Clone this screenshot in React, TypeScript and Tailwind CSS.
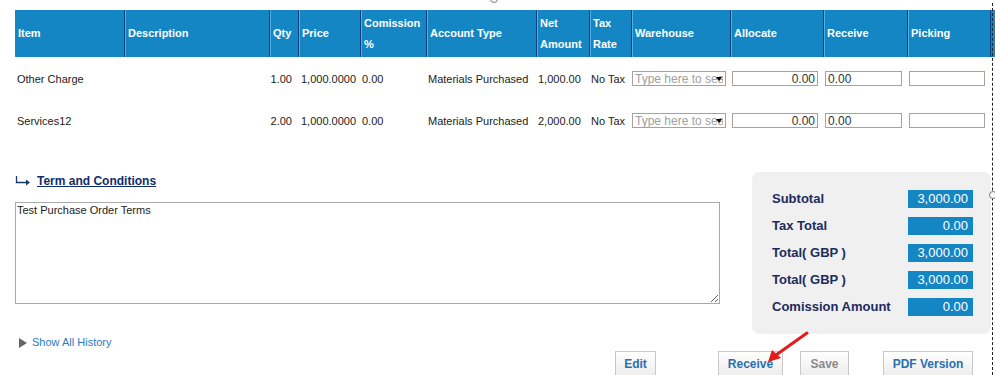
const cols = [
  { key: 'item', label: ['Item'] },
  { key: 'desc', label: ['Description'] },
  { key: 'qty', label: ['Qty'] },
  { key: 'price', label: ['Price'] },
  { key: 'com', label: ['Comission', '%'] },
  { key: 'acct', label: ['Account Type'] },
  { key: 'net', label: ['Net', 'Amount'] },
  { key: 'tax', label: ['Tax', 'Rate'] },
  { key: 'wh', label: ['Warehouse'] },
  { key: 'alloc', label: ['Allocate'] },
  { key: 'recv', label: ['Receive'] },
  { key: 'pick', label: ['Picking'] },
]

const rows = [
  { item: 'Other Charge', qty: '1.00', net: '1,000.00' },
  { item: 'Services12', qty: '2.00', net: '2,000.00' },
]

const totals = [
  { label: 'Subtotal', value: '3,000.00' },
  { label: 'Tax Total', value: '0.00' },
  { label: 'Total( GBP )', value: '3,000.00' },
  { label: 'Total( GBP )', value: '3,000.00' },
  { label: 'Comission Amount', value: '0.00' },
]

const grid = 'grid grid-cols-[109px_145px_29px_62px_66px_110px_53px_42px_99px_93px_84px_84px]'
const inputCls =
  'h-[15px] border border-[#a7a39b] bg-white px-[2px] text-[12px] leading-[13px] text-[#333] outline-none font-["Liberation_Sans",Arial,sans-serif]'
const btn = 'h-[26px] border border-[#c8c8c8] bg-gradient-to-b from-white to-[#ececec]'

function LineRow({ r }: { r: (typeof rows)[number] }) {
  return (
    <div className={`${grid} h-[42px] items-center pt-[2px] text-[11px] text-[#222]`}>
      <div className="pl-[2px]">{r.item}</div>
      <div />
      <div className="pr-[6px] text-right">{r.qty}</div>
      <div className="pl-[3px]">1,000.0000</div>
      <div className="pl-[2px]">0.00</div>
      <div className="pl-[2px]">Materials Purchased</div>
      <div className="pl-[2px]">{r.net}</div>
      <div className="pl-[2px]">No Tax</div>
      <div className="pl-[1px]">
        <div className="relative w-[94px]">
          <input readOnly placeholder="Type here to search" className={`${inputCls} w-[94px] placeholder:text-[#a0a0a0]`} />
          <span className="absolute right-[4px] top-[6px] h-0 w-0 border-x-[3px] border-t-[4px] border-x-transparent border-t-black" />
        </div>
      </div>
      <div className="pl-[2px]">
        <input readOnly defaultValue="0.00" className={`${inputCls} w-[86px] text-right`} />
      </div>
      <div className="pl-[2px]">
        <input readOnly defaultValue="0.00" className={`${inputCls} w-[77px]`} />
      </div>
      <div className="pl-[2px]">
        <input readOnly className={`${inputCls} w-[76px]`} />
      </div>
    </div>
  )
}

export default function App() {
  return (
    <div className='relative h-[375px] w-[995px] overflow-hidden bg-white font-["Liberation_Sans",Arial,sans-serif]'>
      {/* selection frame */}
      <div className="absolute right-[2px] top-[3px] bottom-0 border-r border-dashed border-[#222]" />
      <div className="absolute left-[490px] top-[-5px] h-[8px] w-[8px] rounded-full border border-[#777] bg-white" />
      <div className="absolute left-[989px] top-[191px] h-[8px] w-[8px] rounded-full border border-[#777] bg-white" />

      <div className="pl-[15px] pt-[10px]">
        {/* Lines table */}
        <div className={`${grid} h-[47px] bg-[#1586c4] text-[11px] font-bold leading-[21px] text-white`}>
          {cols.map((c, i) => (
            <div
              key={c.key}
              className={`flex flex-col justify-center px-[3px] ${
                i > 0 ? 'border-l border-[#0b3f7e] shadow-[inset_1px_0_0_#4fb0e6]' : ''
              } ${i === cols.length - 1 ? 'border-r border-r-[#0b3f7e]' : ''}`}
            >
              {c.label.map((l) => (
                <span key={l}>{l}</span>
              ))}
            </div>
          ))}
        </div>
        {rows.map((r) => (
          <LineRow key={r.item} r={r} />
        ))}

        <div className="flex">
          {/* Terms */}
          <div className="w-[705px]">
            <div className="mt-[33px] flex h-[14px] items-center gap-[6px]">
              <svg width="16" height="10" viewBox="0 0 16 10" className="text-[#1a3a6e]">
                <path d="M1.5 0v6.5H12" stroke="currentColor" strokeWidth="1.3" fill="none" />
                <path d="M11 3.5l4 3-4 3z" fill="currentColor" />
              </svg>
              <span className="text-[12px] font-bold text-[#0f2d6b] underline">Term and Conditions</span>
            </div>
            <textarea
              readOnly
              defaultValue="Test Purchase Order Terms"
              className="mt-[14px] block h-[102px] w-[705px] border border-[#a9a9a9] px-[1px] py-0 text-[11px] leading-[15px] text-[#222] outline-none"
            />
            <div className="mt-[32px] flex h-[13px] items-center gap-[5px] pl-[4px] text-[11px] text-[#2b7bc0]">
              <span className="h-0 w-0 border-y-[5px] border-l-[8px] border-y-transparent border-l-[#666]" />
              <span>Show All History</span>
            </div>
          </div>

          {/* Totals */}
          <div className="ml-[32px] mt-[31px] flex h-[162px] w-[239px] flex-col gap-[9px] self-start rounded-[7px] bg-[#f0f0f0] pl-[20px] pr-[18px] pt-[18px]">
            {totals.map((t, i) => (
              <div key={i} className="flex h-[18px] items-center">
                <span className="flex-1 text-[13px] font-bold text-[#1b2b5e]">{t.label}</span>
                <span className="flex h-[18px] w-[65px] items-center justify-end bg-[#1586c4] pr-[5px] text-[13px] text-white">
                  {t.value}
                </span>
              </div>
            ))}
          </div>
        </div>

        {/* Actions */}
        <div className="mt-[2px] flex text-[12px] font-bold">
          <button className={`${btn} ml-[600px] w-[41px] text-[#2a6fb0]`}>Edit</button>
          <button className={`${btn} ml-[62px] w-[65px] text-[#2a6fb0]`}>Receive</button>
          <button className={`${btn} ml-[17px] w-[49px] text-[#8a8a8a]`}>Save</button>
          <button className={`${btn} ml-[34px] w-[90px] text-[#2a6fb0]`}>PDF Version</button>
        </div>
      </div>

      {/* annotation arrow */}
      <svg className="absolute left-[760px] top-[328px]" width="56" height="40" viewBox="0 0 56 40">
        <path d="M47 5L16 27" stroke="#e51b1b" strokeWidth="3" strokeLinecap="round" />
        <path d="M8 34l4-12 9 8z" fill="#e51b1b" />
      </svg>
    </div>
  )
}
